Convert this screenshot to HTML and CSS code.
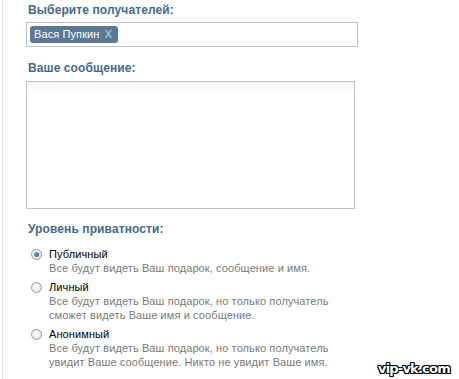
FILE: index.html
```html
<!DOCTYPE html>
<html lang="ru">
<head>
<meta charset="utf-8">
<link rel="stylesheet" href="styles.css">
</head>
<body>
<div class="page">
  <div class="form">
    <div class="label">Выберите получателей:</div>
    <div class="input">
      <span class="chip">Вася Пупкин <span class="chip-x">X</span></span>
    </div>
    <div class="label label-msg">Ваше сообщение:</div>
    <div class="textarea"></div>
    <div class="label label-priv">Уровень приватности:</div>
    <div class="options">
      <div class="option">
        <span class="radio checked"></span>
        <div class="opt-body">
          <div class="opt-title">Публичный</div>
          <div class="opt-desc">Все будут видеть Ваш подарок, сообщение и имя.</div>
        </div>
      </div>
      <div class="option">
        <span class="radio"></span>
        <div class="opt-body">
          <div class="opt-title">Личный</div>
          <div class="opt-desc">Все будут видеть Ваш подарок, но только получатель<br>сможет видеть Ваше имя и сообщение.</div>
        </div>
      </div>
      <div class="option">
        <span class="radio"></span>
        <div class="opt-body">
          <div class="opt-title">Анонимный</div>
          <div class="opt-desc">Все будут видеть Ваш подарок, но только получатель<br>увидит Ваше сообщение. Никто не увидит Ваше имя.</div>
        </div>
      </div>
    </div>
  </div>
  <div class="watermark">vip-vk.com</div>
</div>
</body>
</html>
```
FILE: styles.css
```css
html, body {
  margin: 0;
  padding: 0;
  background: #fff;
}
.page {
  position: relative;
  width: 459px;
  height: 379px;
  overflow: hidden;
  font-family: "Liberation Sans", Arial, sans-serif;
}
.form {
  margin-left: 2px;
  border-left: 1px solid #e6e6e6;
  height: 379px;
  padding-left: 23px;
  box-sizing: border-box;
  padding-top: 3px;
}
.label {
  font-weight: bold;
  font-size: 12px;
  color: #45688e;
  line-height: 14px;
  padding-left: 2px;
  letter-spacing: 0.1px;
}
.input {
  width: 327px;
  height: 23px;
  border: 1px solid #c0c0c0;
  margin-top: 5px;
  display: flex;
  align-items: center;
  padding-left: 3px;
}
.chip {
  display: inline-block;
  background: #5b7897;
  color: #fff;
  border-radius: 3px;
  font-size: 11px;
  line-height: 17px;
  height: 17px;
  padding: 0 6px 0 4px;
  letter-spacing: 0.1px;
}
.chip-x {
  color: #a9bdd4;
  font-weight: bold;
  margin-left: 2px;
}
.label-msg {
  margin-top: 14px;
}
.textarea {
  width: 327px;
  height: 126px;
  border: 1px solid #c0c0c0;
  margin-top: 6px;
  background: linear-gradient(#f4f4f4, #fff 10px);
}
.label-priv {
  margin-top: 13px;
}
.options {
  margin-top: 12px;
  padding-left: 5px;
}
.option {
  display: flex;
  align-items: flex-start;
  margin-bottom: 6px;
}
.radio {
  width: 11px;
  height: 11px;
  border-radius: 50%;
  border: 1px solid #9a9a9a;
  background: radial-gradient(circle at 40% 40%, #fff, #dcdcdc);
  box-sizing: border-box;
  margin-top: 1px;
  position: relative;
  flex: none;
}
.radio.checked::after {
  content: "";
  position: absolute;
  left: 2px;
  top: 2px;
  width: 5px;
  height: 5px;
  border-radius: 50%;
  background: radial-gradient(circle at 35% 35%, #6fa7d8, #1d4f86);
}
.opt-body {
  margin-left: 7px;
  font-size: 11px;
  line-height: 14px;
  letter-spacing: 0.1px;
}
.opt-title {
  color: #000;
  line-height: 13px;
}
.opt-desc {
  color: #7a7a7a;
}
.watermark {
  position: absolute;
  left: 378px;
  top: 361px;
  font-family: "DejaVu Sans", sans-serif;
  font-weight: bold;
  font-size: 13px;
  letter-spacing: -0.8px;
  color: #fff;
  text-shadow: 1px 0 0 #000, -1px 0 0 #000, 0 1px 0 #000, 0 -1px 0 #000, 1px 1px 0 #000, -1px -1px 0 #000, 1px -1px 0 #000, -1px 1px 0 #000;
}
```
